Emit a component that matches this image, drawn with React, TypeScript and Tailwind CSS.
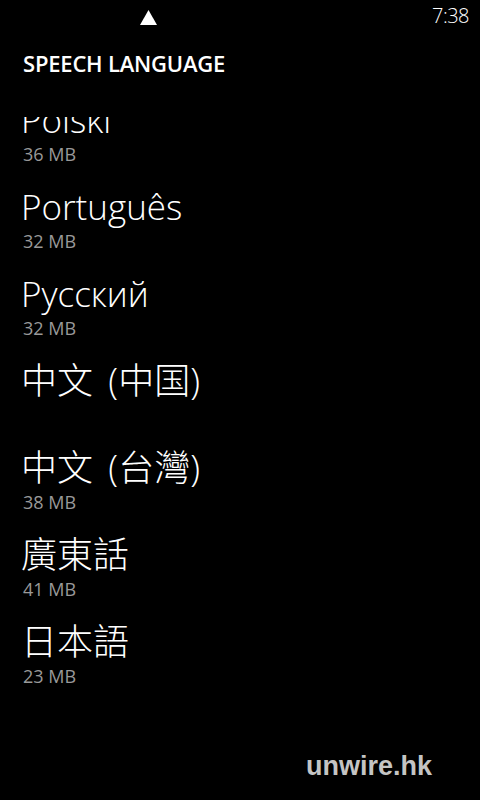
const languages: { name: string; size?: string; cjk?: boolean }[] = [
  { name: 'Polski', size: '36 MB' },
  { name: 'Português', size: '32 MB' },
  { name: 'Русский', size: '32 MB' },
  { name: '中文 (中国)', cjk: true },
  { name: '中文 (台灣)', size: '38 MB', cjk: true },
  { name: '廣東話', size: '41 MB', cjk: true },
  { name: '日本語', size: '23 MB', cjk: true },
];

const font = { fontFamily: '"Open Sans", "Noto Sans CJK TC", sans-serif' };

export default function App() {
  return (
    <div className="relative h-[800px] w-[480px] overflow-hidden bg-black text-white" style={font}>
      {/* status bar */}
      <div className="flex h-[32px] items-start justify-between pl-[140px] pr-[11px]">
        <svg width="17" height="16" viewBox="0 0 17 16" className="mt-[10px]">
          <polygon points="8.5,0 17,15 0,15" fill="#fff" />
        </svg>
        <span className="mt-[2px] text-[20px] font-light leading-[28px] tracking-[-0.5px]">7:38</span>
      </div>

      {/* page title */}
      <div className="h-[85px] pl-[23px] pt-[17px]">
        <h1 className="text-[22px] font-semibold leading-[28px] tracking-[-0.2px]">SPEECH LANGUAGE</h1>
      </div>

      {/* language list */}
      <div className="h-[683px] overflow-hidden">
        <div className="-mt-[17px] flex flex-col pl-[21px]">
          {languages.map((lang) => (
            <div key={lang.name} className="h-[87px]">
              <div
                className={
                  lang.cjk
                    ? 'text-[36px] font-light leading-[40px] [word-spacing:6px]'
                    : 'text-[35px] font-light leading-[40px]'
                }
              >
                {lang.name}
              </div>
              {lang.size && (
                <div className="mt-[4px] pl-[2px] text-[18px] leading-[20px] text-[#999]">{lang.size}</div>
              )}
            </div>
          ))}
        </div>
      </div>

      {/* watermark */}
      <div
        className="absolute bottom-[20px] right-[48px] text-[27px] font-bold leading-none text-[#c4c4c4]"
        style={{ fontFamily: '"Liberation Sans", Arial, sans-serif' }}
      >
        unwire.hk
      </div>
    </div>
  );
}
